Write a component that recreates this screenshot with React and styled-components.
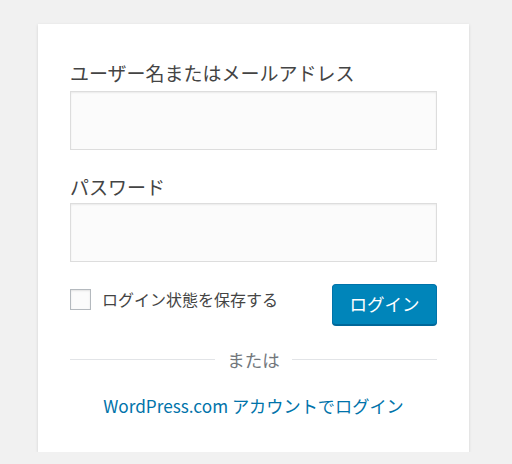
import React from "react";
import styled, { createGlobalStyle } from "styled-components";

const Global = createGlobalStyle`
  html, body { margin: 0; padding: 0; background: #f1f1f1; }
  body { font-family: "Noto Sans CJK JP", "Noto Sans", sans-serif; }
`;

const Page = styled.div`
  padding: 24px 0 0 38px;
`;

const Card = styled.form`
  box-sizing: border-box;
  width: 431px;
  height: 428px;
  background: #fff;
  box-shadow: 0 1px 3px rgba(0, 0, 0, 0.13);
  padding: 36px 32px 0;
  display: flex;
  flex-direction: column;
`;

const Field = styled.div`
  display: flex;
  flex-direction: column;
  gap: ${(p) => p.$gap}px;
  margin-bottom: ${(p) => p.$mb}px;
`;

const Label = styled.label`
  font-size: 19px;
  line-height: 26px;
  color: #444;
  display: block;
`;

const Input = styled.input`
  box-sizing: border-box;
  width: 367px;
  height: 59px;
  margin: 0;
  border: 1px solid #ddd;
  background: #fbfbfb;
  box-shadow: inset 0 1px 2px rgba(0, 0, 0, 0.07);
  outline: none;
  font-size: 24px;
`;

const ActionRow = styled.div`
  display: flex;
  justify-content: space-between;
  align-items: flex-start;
`;

const Remember = styled.label`
  display: flex;
  align-items: center;
  gap: 11px;
  margin-top: 4px;
  font-size: 16px;
  line-height: 22px;
  color: #444;
`;

const Box = styled.span`
  box-sizing: border-box;
  width: 21px;
  height: 21px;
  border: 1px solid #b4b9be;
  background: #fbfbfb;
  box-shadow: inset 0 1px 2px rgba(0, 0, 0, 0.1);
`;

const Button = styled.button`
  box-sizing: border-box;
  width: 105px;
  height: 41px;
  border-radius: 4px;
  border: 1px solid #0073aa;
  border-bottom-color: #006799;
  background: #0085ba;
  box-shadow: 0 1px 0 #006799;
  color: #fff;
  font-family: inherit;
  font-size: 17.5px;
  line-height: 1;
  padding: 0 0 2px;
`;

const Divider = styled.div`
  display: flex;
  align-items: center;
  gap: 12px;
  margin-top: 22px;
  height: 24px;
  font-size: 17.5px;
  color: #72777c;
  &::before, &::after {
    content: "";
    flex: 1;
    height: 1px;
    background: #e2e4e7;
  }
`;

const LinkRow = styled.div`
  margin-top: 23px;
  text-align: center;
  font-size: 17.2px;
  line-height: 24px;
`;

const Link = styled.a`
  color: #0073aa;
  text-decoration: none;
`;

export default function App() {
  return (
    <Page>
      <Global />
      <Card onSubmit={(e) => e.preventDefault()}>
        <Field $gap={5} $mb={24}>
          <Label htmlFor="user">ユーザー名またはメールアドレス</Label>
          <Input id="user" type="text" />
        </Field>
        <Field $gap={3} $mb={22}>
          <Label htmlFor="pass">パスワード</Label>
          <Input id="pass" type="password" />
        </Field>
        <ActionRow>
          <Remember>
            <Box />
            ログイン状態を保存する
          </Remember>
          <Button type="submit">ログイン</Button>
        </ActionRow>
        <Divider>または</Divider>
        <LinkRow>
          <Link href="#">WordPress.com アカウントでログイン</Link>
        </LinkRow>
      </Card>
    </Page>
  );
}
